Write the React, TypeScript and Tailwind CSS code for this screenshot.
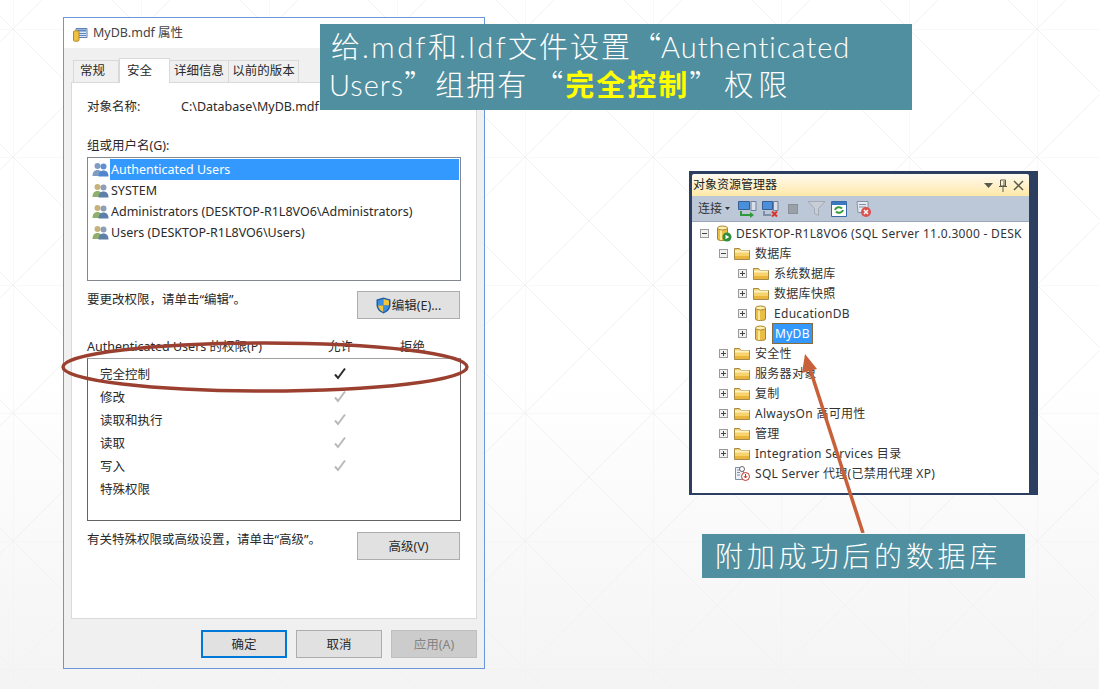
import React from 'react';

const UsersIcon = ({ blue }: { blue?: boolean }) => (
  <svg width="17" height="15" viewBox="0 0 17 15" className="shrink-0">
    <circle cx="5.5" cy="4" r="3" fill={blue ? '#7f9cc4' : '#c9b27a'} />
    <path d="M0.5 14c0-4 2-6 5-6s5 2 5 6z" fill={blue ? '#7f9cc4' : '#8fb06a'} />
    <circle cx="11.5" cy="4.5" r="3" fill={blue ? '#5f8fd0' : '#8d9fb5'} />
    <path d="M6.5 14.5c0-4 2-6 5-6s5 2 5 6z" fill={blue ? '#4f86cf' : '#5d7fa8'} />
  </svg>
);

const Shield = () => (
  <svg width="15" height="17" viewBox="0 0 15 17" className="shrink-0 -mt-[2px]">
    <path d="M7.5 0.5 14.5 2.5V8c0 4-3 7-7 8.5C3.500 15 0.500 12 0.500 8V2.500z" fill="#1f5fa8" />
    <path d="M7.500 2 7.500 8.500H2V3.500z" fill="#3d8fe0" />
    <path d="M7.500 2 13 3.500V8.500H7.500z" fill="#f3c53a" />
    <path d="M2 8.500H7.500V15C4.500 13.800 2.300 11.500 2 8.500z" fill="#f3c53a" />
    <path d="M7.500 8.500H13C12.700 11.500 10.500 13.800 7.500 15z" fill="#3d8fe0" />
  </svg>
);

const Check = ({ dark }: { dark?: boolean }) => (
  <svg width="14" height="13" viewBox="0 0 14 13" className="-mt-[2px]">
    <path d="M2 7.500 5 11 12 1.500" fill="none" stroke={dark ? '#2b2b2b' : '#b9b9b9'} strokeWidth="2" />
  </svg>
);

const Folder = () => (
  <svg width="16" height="13" viewBox="0 0 16 13" className="shrink-0">
    <path d="M0.500 12.500V1.500h5l1.500 2h8.500v9z" fill="#f6d36c" stroke="#a58a4a" />
    <path d="M1 3.500h14v2H1z" fill="#fff3c4" />
    <path d="M1 9h14v3H1z" fill="#e9b53d" />
  </svg>
);

const Cylinder = ({ play }: { play?: boolean }) => (
  <svg width="17" height="17" viewBox="0 0 17 17" className="shrink-0">
    <path d="M2.500 3v11c0 2 10 2 10 0V3z" fill="#edbe45" stroke="#a8862f" />
    <path d="M5 4.500v10.500h2V4.500z" fill="#fbe89a" />
    <ellipse cx="7.500" cy="3" rx="5" ry="2" fill="#fff0b0" stroke="#a8862f" />
    {play && <circle cx="12" cy="12" r="4.500" fill="#2f8f3a" />}
    {play && <path d="M10.500 9.800 14.300 12 10.500 14.200z" fill="#ffffff" />}
  </svg>
);

const AgentIcon = () => (
  <svg width="16" height="16" viewBox="0 0 16 16" className="shrink-0">
    <path d="M1.500 2.500h8v12h-8z" fill="#eef1f6" stroke="#7d8ea8" />
    <path d="M3 5h4M3 7.500h3M3 10h3" stroke="#7d8ea8" />
    <circle cx="8" cy="4" r="2.500" fill="#ffffff" stroke="#6b6b6b" />
    <circle cx="11.500" cy="11.500" r="4" fill="#ffffff" stroke="#c0392b" />
    <path d="M11.500 9v3.500M9.800 11l1.700 2 1.700-2" fill="none" stroke="#c0392b" />
  </svg>
);

const Expander = ({ open }: { open?: boolean }) => (
  <span className="relative w-[9px] h-[9px] shrink-0 border border-[#9a9a9a] bg-[#f1f1f1] flex items-center justify-center">
    <span className="absolute w-[5px] h-px bg-[#444444]" />
    {!open && <span className="absolute w-px h-[5px] bg-[#444444]" />}
  </span>
);

const levelClass = ['pl-[8px]', 'pl-[27px]', 'pl-[46px]'];

type Row = { level: number; label: string; icon: 'folder' | 'db' | 'server' | 'agent'; open?: boolean; none?: boolean; selected?: boolean };

const treeRows: Row[] = [
  { level: 0, label: 'DESKTOP-R1L8VO6 (SQL Server 11.0.3000 - DESK', icon: 'server', open: true },
  { level: 1, label: '数据库', icon: 'folder', open: true },
  { level: 2, label: '系统数据库', icon: 'folder' },
  { level: 2, label: '数据库快照', icon: 'folder' },
  { level: 2, label: 'EducationDB', icon: 'db' },
  { level: 2, label: 'MyDB', icon: 'db', selected: true },
  { level: 1, label: '安全性', icon: 'folder' },
  { level: 1, label: '服务器对象', icon: 'folder' },
  { level: 1, label: '复制', icon: 'folder' },
  { level: 1, label: 'AlwaysOn 高可用性', icon: 'folder' },
  { level: 1, label: '管理', icon: 'folder' },
  { level: 1, label: 'Integration Services 目录', icon: 'folder' },
  { level: 1, label: 'SQL Server 代理(已禁用代理 XP)', icon: 'agent', none: true },
];

const TreeItem = ({ row }: { row: Row }) => (
  <div className={`h-[20px] flex items-center whitespace-nowrap ${levelClass[row.level]}`}>
    {row.none ? <span className="w-[9px] shrink-0" /> : <Expander open={row.open} />}
    <span className="w-[27px] shrink-0 flex justify-center pl-[1px]">
      {row.icon === 'folder' && <Folder />}
      {row.icon === 'db' && <Cylinder />}
      {row.icon === 'server' && <Cylinder play />}
      {row.icon === 'agent' && <AgentIcon />}
    </span>
    {row.selected ? (
      <span className="-ml-[2px] px-[2px] h-[21px] pt-[2px] flex items-center bg-[#3399ff] text-white border border-[#8a6a3a]">{row.label}</span>
    ) : (
      <span className="mt-[2px]">{row.label}</span>
    )}
  </div>
);

const ToolbarIcons = () => (
  <div className="flex items-center ml-[7px]">
    <svg width="22" height="18" viewBox="0 0 22 18">
      <path d="M1.500 1.500h11v8h-11z" fill="#4a8fdc" stroke="#3a5f90" />
      <path d="M14 1.500h5v9h-5z" fill="#d8dfe8" stroke="#6f7f95" />
      <path d="M4 11v4h11" fill="none" stroke="#2f9a3a" strokeWidth="2" />
      <path d="M13 12l4 3-4 3z" fill="#2f9a3a" />
    </svg>
    <svg width="18" height="18" viewBox="0 0 18 18" className="ml-[2px]">
      <path d="M1.500 1.500h10v8h-10z" fill="#4a8fdc" stroke="#3a5f90" />
      <path d="M12.500 1.500h4.500v9h-4.500z" fill="#d8dfe8" stroke="#6f7f95" />
      <path d="M3 11v4h7" fill="none" stroke="#7f8fa5" strokeWidth="2" />
      <path d="M11 11.500l5 5M16 11.500l-5 5" stroke="#d8342a" strokeWidth="2" />
    </svg>
    <span className="ml-[9px] w-[10px] h-[10px] bg-[#9aa0a8] border border-[#8a9098]" />
    <svg width="19" height="17" viewBox="0 0 19 17" className="ml-[9px]">
      <path d="M1 1.500h17l-6.500 7v7l-4-2v-5z" fill="#c9ced6" stroke="#a4aab3" />
    </svg>
    <svg width="16" height="16" viewBox="0 0 16 16" className="ml-[5px]">
      <path d="M0.500 0.500h15v15h-15z" fill="#ffffff" stroke="#3a6aa5" />
      <path d="M1 1h14v3H1z" fill="#3a78c0" />
      <path d="M4 9a4 3.500 0 0 1 7-1.500M12 9a4 3.500 0 0 1-7 1.500" fill="none" stroke="#3a9a3a" strokeWidth="2" />
    </svg>
    <svg width="17" height="18" viewBox="0 0 17 18" className="ml-[8px]">
      <path d="M2 1.500h11v11H3z" fill="#e6ebf2" stroke="#8592a5" />
      <path d="M4 4.500h7M4 7h7" stroke="#8592a5" />
      <circle cx="11" cy="12" r="5" fill="#d9534f" />
      <path d="M9 10l4 4M13 10l-4 4" stroke="#ffffff" strokeWidth="1.500" />
    </svg>
  </div>
);

const perms = [
  { name: '完全控制', state: 'dark' },
  { name: '修改', state: 'gray' },
  { name: '读取和执行', state: 'gray' },
  { name: '读取', state: 'gray' },
  { name: '写入', state: 'gray' },
  { name: '特殊权限', state: 'none' },
];

const users = [
  { name: 'Authenticated Users', selected: true },
  { name: 'SYSTEM' },
  { name: 'Administrators (DESKTOP-R1L8VO6\\Administrators)' },
  { name: 'Users (DESKTOP-R1L8VO6\\Users)' },
];

const DialogButton = ({ children, className }: { children: React.ReactNode; className: string }) => (
  <button className={`h-[28px] pt-[2px] flex items-center justify-center gap-[1px] text-[12.5px] ${className}`}>{children}</button>
);

const PropertiesDialog = () => (
  <div className="absolute left-[63px] top-[17px] w-[422px] h-[652px] border border-[#6c96dc] bg-[#f0f0f0] flex flex-col text-[12.5px] text-[#2a2a2a]">
    <div className="h-[30px] bg-white flex items-center gap-[5px] pl-[9px] pt-[1px] text-[12.5px] text-[#444444] shrink-0">
      <svg width="15" height="16" viewBox="0 0 15 16">
        <path d="M3 2.500h11v9H3z" fill="#dfe8f5" stroke="#5f7fb0" />
        <path d="M4 3.500h9v2H4zM4 7h9v1H4zM4 9h9v1H4z" fill="#5a86c8" />
        <path d="M0.500 5.500c0-1 5.500-1 5.500 0v9c0 1-5.500 1-5.500 0z" fill="#f0c040" stroke="#b08a2a" />
      </svg>
      <span>MyDB.mdf 属性</span>
    </div>
    <div className="h-[34px] pl-[9px] flex items-end shrink-0">
      <div className="w-[46px] h-[22px] pl-[6px] flex items-center bg-[#f0f0f0] border border-b-0 border-[#d9d9d9]">常规</div>
      <div className="w-[51px] h-[25px] pl-[7px] flex items-center bg-white border border-b-0 border-[#d9d9d9] relative top-px">安全</div>
      <div className="w-[59px] h-[22px] flex items-center justify-center border border-b-0 border-l-0 border-[#d9d9d9]">详细信息</div>
      <div className="w-[70px] h-[22px] flex items-center justify-center border border-b-0 border-l-0 border-[#d9d9d9]">以前的版本</div>
    </div>
    <div className="mx-[7px] h-[537px] bg-white border border-[#d9d9d9] pl-[15px] shrink-0">
      <div className="mt-[15px] h-[18px] flex items-center whitespace-nowrap">
        <span className="w-[94px]">对象名称:</span>
        <span>C:\Database\MyDB.mdf</span>
      </div>
      <div className="mt-[21px] h-[18px] flex items-center">组或用户名(G):</div>
      <div className="mt-[2px] w-[374px] h-[124px] border border-[#828790] p-[1px]">
        {users.map((u) => (
          <div key={u.name} className="h-[21px] flex items-center pl-[3px] gap-[1px] whitespace-nowrap">
            <UsersIcon blue={u.selected} />
            <span className={`h-[21px] flex items-center pl-[1px] pt-[2px] ${u.selected ? 'flex-1 bg-[#3399ff] text-white' : ''}`}>{u.name}</span>
          </div>
        ))}
      </div>
      <div className="mt-[10px] w-[373px] flex justify-between items-start">
        <span>要更改权限，请单击“编辑”。</span>
        <DialogButton className="w-[103px] bg-[#e1e1e1] border border-[#adadad]">
          <Shield />
          编辑(E)...
        </DialogButton>
      </div>
      <div className="mt-[18px] h-[18px] pt-[2px] flex items-center whitespace-nowrap">
        <span className="w-[241px]">Authenticated Users 的权限(P)</span>
        <span className="w-[72px]">允许</span>
        <span>拒绝</span>
      </div>
      <div className="mt-[3px] w-[374px] h-[163px] border border-[#646464] border-t-[#a0a0a0] pt-[4px] pl-[12px]">
        {perms.map((p) => (
          <div key={p.name} className="h-[23px] flex items-center">
            <span className="w-[228px] pt-[2px]">{p.name}</span>
            <span className="w-[24px] flex justify-center">
              {p.state === 'dark' && <Check dark />}
              {p.state === 'gray' && <Check />}
            </span>
          </div>
        ))}
      </div>
      <div className="mt-[11px] w-[373px] flex justify-between items-start">
        <span className="mt-[-1px]">有关特殊权限或高级设置，请单击“高级”。</span>
        <DialogButton className="w-[103px] bg-[#e1e1e1] border border-[#adadad]">高级(V)</DialogButton>
      </div>
    </div>
    <div className="mt-[11px] flex justify-end gap-[9px] pr-[7px]">
      <DialogButton className="w-[86px] bg-[#e1e1e1] border-2 border-[#0078d7]">确定</DialogButton>
      <DialogButton className="w-[86px] bg-[#e1e1e1] border border-[#adadad]">取消</DialogButton>
      <DialogButton className="w-[86px] bg-[#cccccc] border border-[#bfbfbf] text-[#838383]">应用(A)</DialogButton>
    </div>
  </div>
);

const ObjectExplorer = () => (
  <div className="absolute left-[689px] top-[171px] w-[349px] h-[324px] bg-[#2d3f60] pl-[3px] pr-[9px] pt-[3px] pb-[2px] flex flex-col text-[12px] text-[#333333] tracking-[0.3px]">
    <div className="h-[22px] shrink-0 rounded-t-[2px] bg-linear-to-b from-[#fffaf0] to-[#ffe8a6] flex items-center justify-between pl-[1px] pr-[5px] text-[#222222] tracking-normal">
      <span>对象资源管理器</span>
      <span className="flex items-center gap-[5px]">
        <svg width="9" height="5" viewBox="0 0 9 5"><path d="M0 0h9L4.500 5z" fill="#5a5a4a" /></svg>
        <svg width="10" height="13" viewBox="0 0 10 13"><path d="M2.500 1h5v6h-5zM1 7.500h8M5 8v5M6 2v5" fill="none" stroke="#5a5a4a" /></svg>
        <svg width="11" height="11" viewBox="0 0 11 11"><path d="M1 1l9 9M10 1l-9 9" stroke="#5a5a4a" strokeWidth="1.500" /></svg>
      </span>
    </div>
    <div className="h-[26px] shrink-0 bg-[#bcc7d8] border-b border-[#9aa7ba] flex items-center pl-[6px] text-[#333333] tracking-normal">
      <span>连接</span>
      <svg width="5" height="3" viewBox="0 0 5 3" className="ml-[3px]"><path d="M0 0h5L2.500 3z" fill="#333333" /></svg>
      <ToolbarIcons />
    </div>
    <div className="flex-1 bg-white overflow-hidden pt-[1px]">
      {treeRows.map((row) => (
        <TreeItem key={row.label} row={row} />
      ))}
    </div>
  </div>
);

export default function App() {
  return (
    <div className="relative w-[1099px] h-[689px] overflow-hidden bg-linear-to-b from-white from-55% to-[#f4f4f4] font-['Noto_Sans','Noto_Sans_CJK_SC',sans-serif]">
      <svg className="absolute inset-0" width="1099" height="689">
        <defs>
          <pattern id="slideGrid" x="13" y="29" width="128" height="128" patternUnits="userSpaceOnUse">
            <path d="M0 0H128M0 0V128M0 0L128 128M128 0L0 128" fill="none" stroke="#f2f2f2" strokeWidth="1" />
          </pattern>
        </defs>
        <rect width="1099" height="689" fill="url(#slideGrid)" />
      </svg>

      <PropertiesDialog />
      <ObjectExplorer />

      {/* ellipse and arrow drawn on the slide, over the screenshots */}
      <svg className="absolute left-[58px] top-[338px]" width="416" height="60" viewBox="0 0 416 60">
        <ellipse cx="207" cy="29" rx="202" ry="24" fill="none" stroke="#9b4030" strokeWidth="3.500" />
      </svg>
      <svg className="absolute left-[795px] top-[345px]" width="80" height="195" viewBox="0 0 80 195">
        <path d="M68 188 15 24" stroke="#c8603a" strokeWidth="3.500" />
        <path d="M10 9 22 24 7 28z" fill="#c8603a" />
      </svg>

      <div className="absolute left-[320px] top-[24px] w-[592px] h-[86px] bg-[#508fa0] text-white text-[29px] leading-[38px] pt-[2px] pl-[11px] tracking-[2px] font-['Noto_Sans_CJK_SC',sans-serif] font-light whitespace-nowrap">
        <div className="h-[38px]">
          给<span className="font-['Lato',sans-serif] tracking-[2.5px]">.mdf</span>和<span className="font-['Lato',sans-serif] tracking-[2.5px]">.ldf</span>文件设置“<span className="-ml-[2px] font-['Lato',sans-serif] tracking-[1px]">Authenticated</span>
        </div>
        <div className="h-[38px] -ml-[2px]">
          <span className="font-['Lato',sans-serif] tracking-[1px]">Users</span>”组拥有<span className="ml-[6px]">“</span><span className="font-bold text-[#ffff00]">完全控制</span>”<span className="ml-[4px] tracking-[5px]">权限</span>
        </div>
      </div>

      <div className="absolute left-[701px] top-[533px] w-[325px] h-[46px] bg-[#508fa0] border border-[#f4f8f9] text-white text-[28px] leading-[43px] pl-[13px] tracking-[3.800px] font-['Noto_Sans_CJK_SC',sans-serif] font-light whitespace-nowrap">
        附加成功后的数据库
      </div>
    </div>
  );
}
